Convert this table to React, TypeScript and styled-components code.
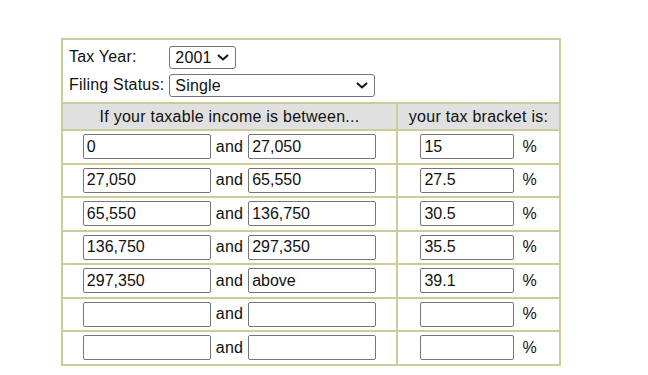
import React from "react";
import styled, { createGlobalStyle } from "styled-components";

type Bracket = {
  from: string;
  to: string;
  rate: string;
};

const brackets: Bracket[] = [
  { from: "0", to: "27,050", rate: "15" },
  { from: "27,050", to: "65,550", rate: "27.5" },
  { from: "65,550", to: "136,750", rate: "30.5" },
  { from: "136,750", to: "297,350", rate: "35.5" },
  { from: "297,350", to: "above", rate: "39.1" },
  { from: "", to: "", rate: "" },
  { from: "", to: "", rate: "" },
];

const years = ["2001", "2002", "2003", "2004"];
const statuses = [
  "Single",
  "Married Filing Jointly",
  "Married Filing Separately",
  "Head of Household",
];

const FONT = `"Liberation Sans", Arial, sans-serif`;

const GlobalStyle = createGlobalStyle`
  body {
    margin: 0;
    background: #fff;
    font-family: ${FONT};
  }
`;

// chevron drawn over the select, native arrow is switched off
const Chevron = () => (
  <svg width="12" height="7" viewBox="0 0 12 7">
    <path d="M1 1 L6 5.5 L11 1" fill="none" stroke="#111" strokeWidth="2" />
  </svg>
);

type DropdownProps = {
  width: number;
  value: string;
  options: string[];
};

const Dropdown = ({ width, value, options }: DropdownProps) => (
  <PickerWrap>
    <Picker $width={width} defaultValue={value}>
      {options.map((o) => (
        <option key={o}>{o}</option>
      ))}
    </Picker>
    <Arrow>
      <Chevron />
    </Arrow>
  </PickerWrap>
);

export default function App() {
  return (
    <>
      <GlobalStyle />
      <Page>
        <BracketTable>
          <colgroup>
            <col style={{ width: 333 }} />
            <col style={{ width: 161 }} />
          </colgroup>
          <tbody>
            <tr>
              <SettingsCell colSpan={2}>
                <Settings>
                  <Label>Tax Year:</Label>
                  <Dropdown width={67} value="2001" options={years} />
                  <Label>Filing Status:</Label>
                  <Dropdown width={206} value="Single" options={statuses} />
                </Settings>
              </SettingsCell>
            </tr>
            <tr>
              <HeadCell>If your taxable income is between...</HeadCell>
              <HeadCell>your tax bracket is:</HeadCell>
            </tr>
            {brackets.map((b, i) => (
              <tr key={i}>
                <RowCell>
                  <Range>
                    <Field $width={128} defaultValue={b.from} />
                    <Label>and</Label>
                    <Field $width={128} defaultValue={b.to} />
                  </Range>
                </RowCell>
                <RowCell>
                  <Range>
                    <Field $width={94} defaultValue={b.rate} />
                    <Unit>%</Unit>
                  </Range>
                </RowCell>
              </tr>
            ))}
          </tbody>
        </BracketTable>
      </Page>
    </>
  );
}

const Page = styled.div`
  padding: 38px 0 0 61px;
`;

const BracketTable = styled.table`
  width: 500px;
  table-layout: fixed;
  border-collapse: separate;
  border-spacing: 2px;
  background: #cccc99;
  font-size: 16px;
  color: #111;
`;

const SettingsCell = styled.td`
  height: 62px;
  padding: 0 6px;
  background: #fff;
  vertical-align: middle;
`;

const Settings = styled.div`
  display: grid;
  grid-template-columns: auto auto;
  justify-content: start;
  justify-items: start;
  align-items: center;
  column-gap: 5px;
  row-gap: 5px;
`;

const Label = styled.span`
  line-height: 18px;
  letter-spacing: 0.2px;
`;

const PickerWrap = styled.div`
  position: relative;
  display: inline-flex;
`;

const Picker = styled.select<{ $width: number }>`
  width: ${({ $width }) => $width}px;
  height: 23px;
  padding: 0 0 0 5px;
  appearance: none;
  font: 16px ${FONT};
  letter-spacing: 0.2px;
  color: #111;
  background: #fff;
  border: 1px solid #767676;
  border-radius: 3px;
`;

const Arrow = styled.span`
  position: absolute;
  top: 8px;
  right: 7px;
  display: flex;
  pointer-events: none;
`;

const HeadCell = styled.td`
  height: 25px;
  padding: 0;
  background: #e0e0e0;
  text-align: center;
  vertical-align: middle;
  letter-spacing: 0.25px;
`;

const RowCell = styled.td`
  height: 31.5px;
  padding: 0;
  background: #fff;
  vertical-align: middle;
`;

const Range = styled.div`
  display: flex;
  justify-content: center;
  align-items: center;
  gap: 5px;
`;

const Field = styled.input<{ $width: number }>`
  width: ${({ $width }) => $width}px;
  height: 25px;
  box-sizing: border-box;
  margin: 0;
  padding: 1px 3px;
  font: 16px ${FONT};
  color: #111;
  background: #fff;
  border: 1px solid #767676;
  border-radius: 2px;
`;

const Unit = styled.span`
  margin-left: 3px;
`;
